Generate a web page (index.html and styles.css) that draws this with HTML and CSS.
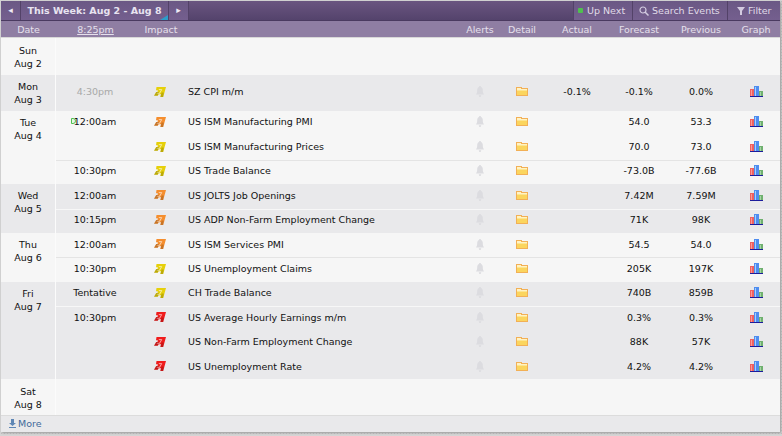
FILE: index.html
```html
<!DOCTYPE html>
<html lang="en">
<head>
<meta charset="utf-8">
<title>Calendar</title>
<link rel="stylesheet" href="styles.css">
</head>
<body>
<svg class="defs" width="0" height="0" aria-hidden="true">
  <symbol id="impact" viewBox="0 0 12 10">
    <path d="M2.500 0H12L9.200 10H6.300L7 7.300H4.700L3.700 8.800H0L2.200 5H3.500L3.800 3.200H2z"/>
    <path fill="none" stroke="#fff" stroke-opacity=".75" stroke-width=".8" d="M2.800 6.300H5.600L7.700 2.600H4.800"/>
    <path fill="#000" fill-opacity=".18" d="M0 8.800L2.200 5H5L3.700 8.800zM6.300 10L7.600 5.500H9.700L9.200 10z"/>
  </symbol>
  <symbol id="bell" viewBox="0 0 8 11">
    <path fill="#dcdce0" d="M4 0C4.800 0 5 .5 5 1 6.500 1.600 6.800 3 6.800 4.600 6.800 6.400 7.200 7.500 8 8.500H0C.8 7.500 1.200 6.400 1.200 4.600 1.200 3 1.500 1.600 3 1 3 .5 3.200 0 4 0zM2.800 9.200H5.200C5.200 10.200 4.700 11 4 11S2.800 10.200 2.800 9.200z"/>
  </symbol>
  <symbol id="folder" viewBox="0 0 12 9">
    <path fill="#f2b056" d="M0 0h6v1h6v8H0z"/>
    <path fill="#fff3c4" d="M1 1h4v1h6v1H1z"/>
    <path fill="#fbd55e" d="M1 3h10v5H1z"/>
    <path fill="#fde58f" d="M1 3h10v1H1z"/>
  </symbol>
  <symbol id="graph" viewBox="0 0 13 11">
    <path fill="#f0605f" d="M0 3h4v7H0z"/>
    <path fill="#fa9a98" d="M1 4h1v6H1z"/>
    <path fill="#4f8df0" d="M4 0h5v10H4z"/>
    <path fill="#a8d0fb" d="M5 1h1v9H5z"/>
    <path fill="#6fb06f" d="M9 5h4v5H9z"/>
    <path fill="#a6d6a6" d="M10 6h1v4h-1z"/>
    <path fill="#1c1c9c" d="M0 10h13v1H0z"/>
  </symbol>
</svg>
<main class="cal">
  <div class="bar">
    <div class="btn arrow">&#9666;</div>
    <div class="btn week">This Week: Aug 2 - Aug 8</div>
    <div class="btn arrow">&#9656;</div>
    <div class="fill"></div>
    <div class="btn tool t-up"><span class="dot"></span>Up Next</div>
    <div class="btn tool t-search"><svg class="ic" viewBox="0 0 10 10"><circle cx="4" cy="4" r="3" fill="none" stroke="#d3cbe0" stroke-width="1.200"/><path d="M6 6l3.500 3.500" stroke="#d3cbe0" stroke-width="1.500"/></svg>Search Events</div>
    <div class="btn tool t-filter"><svg class="ic" viewBox="0 0 10 10"><path d="M1 1h8L6 5v4H4V5z" fill="#d3cbe0"/></svg>Filter</div>
  </div>
  <div class="row head">
    <div class="c-day">Date</div>
    <div class="c-time"><u>8:25pm</u></div>
    <div class="c-impact">Impact</div>
    <div class="c-event"></div>
    <div class="c-alert">Alerts</div>
    <div class="c-detail">Detail</div>
    <div class="c-num">Actual</div>
    <div class="c-num">Forecast</div>
    <div class="c-num">Previous</div>
    <div class="c-graph">Graph</div>
  </div>

  <section class="day tall first">
    <div class="c-day">Sun<br>Aug 2</div>
    <div class="rows"></div>
  </section>

  <section class="day tall alt">
    <div class="c-day">Mon<br>Aug 3</div>
    <div class="rows">
      <div class="row"><div class="c-time past">4:30pm</div><div class="c-impact"><svg class="imp yel"><use href="#impact"/></svg></div><div class="c-event">SZ CPI m/m</div><div class="c-alert"><svg class="bell"><use href="#bell"/></svg></div><div class="c-detail"><svg class="folder"><use href="#folder"/></svg></div><div class="c-num">-0.1%</div><div class="c-num">-0.1%</div><div class="c-num">0.0%</div><div class="c-graph"><svg class="graph"><use href="#graph"/></svg></div></div>
    </div>
  </section>

  <section class="day">
    <div class="c-day">Tue<br>Aug 4</div>
    <div class="rows">
      <div class="row top"><div class="c-time"><span class="next"></span>12:00am</div><div class="c-impact"><svg class="imp ora"><use href="#impact"/></svg></div><div class="c-event">US ISM Manufacturing PMI</div><div class="c-alert"><svg class="bell"><use href="#bell"/></svg></div><div class="c-detail"><svg class="folder"><use href="#folder"/></svg></div><div class="c-num"></div><div class="c-num">54.0</div><div class="c-num">53.3</div><div class="c-graph"><svg class="graph"><use href="#graph"/></svg></div></div>
      <div class="row"><div class="c-time"></div><div class="c-impact"><svg class="imp yel"><use href="#impact"/></svg></div><div class="c-event">US ISM Manufacturing Prices</div><div class="c-alert"><svg class="bell"><use href="#bell"/></svg></div><div class="c-detail"><svg class="folder"><use href="#folder"/></svg></div><div class="c-num"></div><div class="c-num">70.0</div><div class="c-num">73.0</div><div class="c-graph"><svg class="graph"><use href="#graph"/></svg></div></div>
      <div class="row new"><div class="c-time">10:30pm</div><div class="c-impact"><svg class="imp yel"><use href="#impact"/></svg></div><div class="c-event">US Trade Balance</div><div class="c-alert"><svg class="bell"><use href="#bell"/></svg></div><div class="c-detail"><svg class="folder"><use href="#folder"/></svg></div><div class="c-num"></div><div class="c-num">-73.0B</div><div class="c-num">-77.6B</div><div class="c-graph"><svg class="graph"><use href="#graph"/></svg></div></div>
    </div>
  </section>

  <section class="day alt">
    <div class="c-day">Wed<br>Aug 5</div>
    <div class="rows">
      <div class="row"><div class="c-time">12:00am</div><div class="c-impact"><svg class="imp ora"><use href="#impact"/></svg></div><div class="c-event">US JOLTS Job Openings</div><div class="c-alert"><svg class="bell"><use href="#bell"/></svg></div><div class="c-detail"><svg class="folder"><use href="#folder"/></svg></div><div class="c-num"></div><div class="c-num">7.42M</div><div class="c-num">7.59M</div><div class="c-graph"><svg class="graph"><use href="#graph"/></svg></div></div>
      <div class="row new"><div class="c-time">10:15pm</div><div class="c-impact"><svg class="imp ora"><use href="#impact"/></svg></div><div class="c-event">US ADP Non-Farm Employment Change</div><div class="c-alert"><svg class="bell"><use href="#bell"/></svg></div><div class="c-detail"><svg class="folder"><use href="#folder"/></svg></div><div class="c-num"></div><div class="c-num">71K</div><div class="c-num">98K</div><div class="c-graph"><svg class="graph"><use href="#graph"/></svg></div></div>
    </div>
  </section>

  <section class="day">
    <div class="c-day">Thu<br>Aug 6</div>
    <div class="rows">
      <div class="row"><div class="c-time">12:00am</div><div class="c-impact"><svg class="imp ora"><use href="#impact"/></svg></div><div class="c-event">US ISM Services PMI</div><div class="c-alert"><svg class="bell"><use href="#bell"/></svg></div><div class="c-detail"><svg class="folder"><use href="#folder"/></svg></div><div class="c-num"></div><div class="c-num">54.5</div><div class="c-num">54.0</div><div class="c-graph"><svg class="graph"><use href="#graph"/></svg></div></div>
      <div class="row new"><div class="c-time">10:30pm</div><div class="c-impact"><svg class="imp yel"><use href="#impact"/></svg></div><div class="c-event">US Unemployment Claims</div><div class="c-alert"><svg class="bell"><use href="#bell"/></svg></div><div class="c-detail"><svg class="folder"><use href="#folder"/></svg></div><div class="c-num"></div><div class="c-num">205K</div><div class="c-num">197K</div><div class="c-graph"><svg class="graph"><use href="#graph"/></svg></div></div>
    </div>
  </section>

  <section class="day alt">
    <div class="c-day">Fri<br>Aug 7</div>
    <div class="rows">
      <div class="row"><div class="c-time">Tentative</div><div class="c-impact"><svg class="imp yel"><use href="#impact"/></svg></div><div class="c-event">CH Trade Balance</div><div class="c-alert"><svg class="bell"><use href="#bell"/></svg></div><div class="c-detail"><svg class="folder"><use href="#folder"/></svg></div><div class="c-num"></div><div class="c-num">740B</div><div class="c-num">859B</div><div class="c-graph"><svg class="graph"><use href="#graph"/></svg></div></div>
      <div class="row new"><div class="c-time">10:30pm</div><div class="c-impact"><svg class="imp red"><use href="#impact"/></svg></div><div class="c-event">US Average Hourly Earnings m/m</div><div class="c-alert"><svg class="bell"><use href="#bell"/></svg></div><div class="c-detail"><svg class="folder"><use href="#folder"/></svg></div><div class="c-num"></div><div class="c-num">0.3%</div><div class="c-num">0.3%</div><div class="c-graph"><svg class="graph"><use href="#graph"/></svg></div></div>
      <div class="row"><div class="c-time"></div><div class="c-impact"><svg class="imp red"><use href="#impact"/></svg></div><div class="c-event">US Non-Farm Employment Change</div><div class="c-alert"><svg class="bell"><use href="#bell"/></svg></div><div class="c-detail"><svg class="folder"><use href="#folder"/></svg></div><div class="c-num"></div><div class="c-num">88K</div><div class="c-num">57K</div><div class="c-graph"><svg class="graph"><use href="#graph"/></svg></div></div>
      <div class="row"><div class="c-time"></div><div class="c-impact"><svg class="imp red"><use href="#impact"/></svg></div><div class="c-event">US Unemployment Rate</div><div class="c-alert"><svg class="bell"><use href="#bell"/></svg></div><div class="c-detail"><svg class="folder"><use href="#folder"/></svg></div><div class="c-num"></div><div class="c-num">4.2%</div><div class="c-num">4.2%</div><div class="c-graph"><svg class="graph"><use href="#graph"/></svg></div></div>
    </div>
  </section>

  <section class="day tall first last">
    <div class="c-day">Sat<br>Aug 8</div>
    <div class="rows"></div>
  </section>

  <div class="foot"><span class="more"><svg class="dl" viewBox="0 0 7 9"><path d="M2 0h3v4h2L3.500 7 0 4h2zM0 8h7v1H0z" fill="#5f87b5"/></svg>More</span></div>
</main>
</body>
</html>
```
FILE: styles.css
```css
* { box-sizing: border-box; }
html, body { margin: 0; height: 100%; }
body {
  background-color: #d4d4d4;
  background-image: radial-gradient(#bfbfbf 0.5px, transparent 0.6px);
  background-size: 3px 3px;
  font: 9.5px/13px "DejaVu Sans", Verdana, sans-serif;
  color: #111;
  padding: 1px 2px 3px 1px;
}
.defs { position: absolute; }
.cal { width: 779px; box-shadow: 1px 1px 2px #9a9a9a; background: #f6f6f6; }
.bar {
  display: flex; height: 20px;
  background: linear-gradient(#6a5580, #54436c);
  color: #e0dbe8;
  border-bottom: 1px solid #4a3a60;
}
.btn { display: flex; align-items: center; background: linear-gradient(#6b5885, #745f8e); border-right: 1px solid #534268; }
.arrow { width: 20px; justify-content: center; font-size: 9px; color: #efeaf5; }
.week { width: 148px; justify-content: center; font-weight: 700; color: #e8e3f0; position: relative; }
.week::after {
  content: ""; position: absolute; right: 0; bottom: 0;
  border-left: 8px solid transparent; border-bottom: 5px solid #2e9cc9;
}
.fill { flex: 1; }
.tool { gap: 4px; border-right: 0; border-left: 1px solid #534268; }
.t-up { width: 59px; padding-left: 4px; }
.t-search { width: 95px; padding-left: 6px; gap: 3px; }
.t-filter { width: 53px; padding-left: 8px; gap: 2px; }
.dot { width: 5px; height: 5px; background: #4fc04f; border-radius: 1px; }
.ic { width: 10px; height: 10px; }
.row { display: flex; align-items: center; height: 24.4px; padding-bottom: 2px; }
.row.new, .row.top { padding-bottom: 3px; }
.head {
  height: 17px; padding-bottom: 0; background: #8f7ea3; color: #e6e0ec;
  border-bottom: 1px solid #d8d8d8;
}
.head .c-day { width: 55px; }
.head .c-time { width: 79px; }
.c-day { flex: none; text-align: center; }
.c-time { width: 78px; flex: none; text-align: center; position: relative; }
.c-impact { width: 52px; flex: none; display: flex; justify-content: center; }
.c-event { flex: 1; padding-left: 2px; white-space: nowrap; }
.c-alert { width: 40px; flex: none; display: flex; justify-content: center; }
.c-detail { width: 46px; padding-right: 2px; flex: none; display: flex; justify-content: center; }
.c-num { width: 62px; flex: none; text-align: center; }
.c-graph { width: 48px; flex: none; display: flex; justify-content: center; }
.day { display: flex; background: #f6f6f6; }
.day.alt { background: #e9e9eb; }
.day > .c-day { padding-top: 5px; border-right: 1px solid #fbfbfb; width: 55px; }
.first > .c-day { padding-top: 6px; }
.rows { flex: 1; }
.tall { height: 36.500px; }
.tall .row { height: 36.500px; padding-bottom: 2px; }
.last { height: 36px; }
.rows .new { border-top: 1px solid #e4e4e4; }
.day.alt .rows .new { border-top-color: #f7f7f7; }
.past { color: #a8a8a8; }
.next {
  position: absolute; left: 15px; top: 3px; width: 5px; height: 6px;
  background: #e6f6e6; border: 1px solid #4fc04f; border-radius: 0 3px 3px 0;
}
.imp { width: 12px; height: 10px; }
.yel { fill: #e6d00a; }
.ora { fill: #f58e2e; }
.red { fill: #f01c1c; }
.bell { width: 8px; height: 11px; }
.folder { width: 12px; height: 9px; }
.graph { width: 13px; height: 11px; }
.foot {
  height: 17px; background: #e9e9eb; border-top: 1px solid #dcdcdc;
  display: flex; align-items: center; padding: 0 0 1px 8px;
}
.more { color: #426a9a; display: flex; align-items: center; gap: 2px; }
.dl { width: 7px; height: 9px; }
```
